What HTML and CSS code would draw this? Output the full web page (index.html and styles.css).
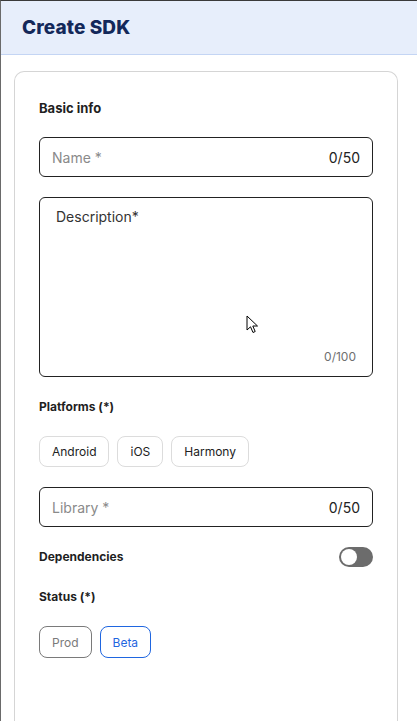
FILE: index.html
```html
<!DOCTYPE html>
<html>
<head>
<meta charset="utf-8">
<link rel="stylesheet" href="styles.css">
</head>
<body>
<header class="header"><h1 class="title">Create SDK</h1></header>
<main class="card">
  <h2 class="section-title">Basic info</h2>
  <div class="form">
    <div class="input">
      <span class="placeholder">Name *</span>
      <span class="count">0/50</span>
    </div>
    <div class="textarea">
      <span class="ta-label">Description*</span>
      <span class="ta-count">0/100</span>
      <svg class="cursor" width="13" height="19" viewBox="0 0 13 19"><path d="M1 1 L1 15 L4.5 11.8 L7 17.5 L9.2 16.5 L6.8 11 L11.5 11 Z" fill="#fff" stroke="#000" stroke-width="1" stroke-linejoin="round"/></svg>
    </div>
    <div class="label">Platforms (*)</div>
    <div class="chips">
      <span class="chip">Android</span>
      <span class="chip">iOS</span>
      <span class="chip">Harmony</span>
    </div>
    <div class="input">
      <span class="placeholder">Library *</span>
      <span class="count">0/50</span>
    </div>
    <div class="row">
      <span class="label">Dependencies</span>
      <span class="toggle"><span class="knob"></span></span>
    </div>
    <div class="label status-label">Status (*)</div>
    <div class="chips">
      <span class="status">Prod</span>
      <span class="status active">Beta</span>
    </div>
  </div>
</main>
</body>
</html>
```
FILE: styles.css
```css
* { box-sizing: border-box; }
html, body { margin: 0; padding: 0; }
html { height: 721px; overflow: hidden; }
body {
  font-family: Inter, "Noto Sans", sans-serif;
  background: #fff;
  color: #1f1f1f;
  border-top: 1px solid #3a3a3a;
  border-left: 1px solid #6a6a6a;
  height: 721px;
  overflow: hidden;
  display: flex;
  flex-direction: column;
}
.header {
  flex: none;
  height: 54px;
  background: #e7eefb;
  border-bottom: 1px solid #c4d5f4;
  display: flex;
  align-items: center;
  padding-left: 21px;
}
.title {
  margin: 0;
  font-size: 19px;
  font-weight: 800;
  color: #13285a;
  letter-spacing: 0.1px;
}
.card {
  flex: 1;
  min-height: 0;
  margin: 16px 19px 0 13px;
  border: 1px solid #d5d5d5;
  border-bottom: 0;
  border-radius: 10px 10px 0 0;
  padding: 26px 24px 0;
  overflow: hidden;
}
.section-title {
  margin: 0 0 19px;
  font-size: 13px;
  font-weight: 700;
  line-height: 20px;
  color: #1f1f1f;
}
.form {
  display: flex;
  flex-direction: column;
  gap: 20px;
}
.input {
  height: 40px;
  border: 1px solid #222;
  border-radius: 6px;
  display: flex;
  align-items: center;
  justify-content: space-between;
  padding: 0 12px;
  font-size: 14px;
}
.placeholder { color: #8a8a8a; }
.count { color: #222; }
.textarea {
  position: relative;
  height: 180px;
  margin-bottom: 1px;
  border: 1px solid #222;
  border-radius: 6px;
  padding: 10px 16px;
  display: flex;
  flex-direction: column;
  justify-content: space-between;
}
.ta-label { font-size: 14px; color: #333; line-height: 18px; }
.ta-count { align-self: flex-end; font-size: 12px; color: #6f6f6f; line-height: 16px; margin-bottom: 1px; }
.cursor { position: absolute; left: 206px; top: 117px; }
.label {
  font-size: 12px;
  font-weight: 700;
  line-height: 18px;
  color: #1f1f1f;
}
.status-label { margin-top: 1px; }
.chips { display: flex; gap: 8px; }
.chip {
  height: 31px;
  display: inline-flex;
  align-items: center;
  padding: 0 12px;
  border: 1px solid #dcdcdc;
  border-radius: 8px;
  font-size: 12px;
  color: #222;
}
.status {
  height: 32px;
  display: inline-flex;
  align-items: center;
  padding: 0 12px;
  border: 1px solid #7a7a7a;
  border-radius: 8px;
  font-size: 12px;
  color: #7a7a7a;
}
.status.active { border-color: #1f66e0; color: #1f66e0; }
.row {
  display: flex;
  align-items: center;
  justify-content: space-between;
  height: 20px;
}
.toggle {
  width: 34px;
  height: 20px;
  border-radius: 10px;
  background: #6c6c6c;
  display: flex;
  align-items: center;
  padding-left: 2px;
}
.knob {
  width: 16px;
  height: 16px;
  border-radius: 50%;
  background: #fff;
}
```
